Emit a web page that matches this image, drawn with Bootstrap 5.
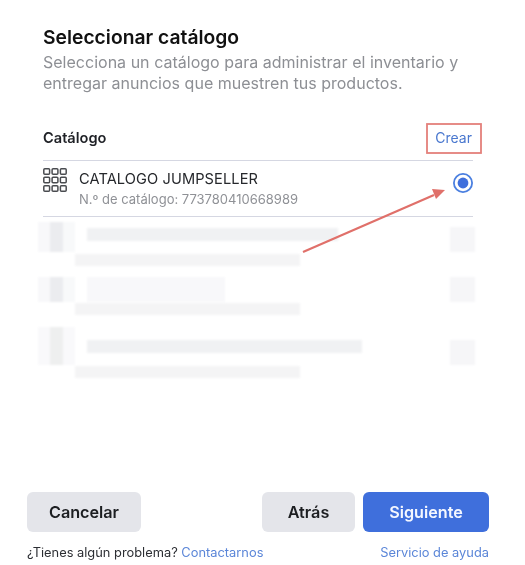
<!DOCTYPE html>
<html lang="es">
<head>
<meta charset="utf-8">
<title>Seleccionar catálogo</title>
<link href="https://cdn.jsdelivr.net/npm/bootstrap@5.3.0/dist/css/bootstrap.min.css" rel="stylesheet">
<style>
html,body{height:100%;overflow:hidden;background:#fff}
body{font-family:Inter,"Liberation Sans",sans-serif;color:#1c1e21;-webkit-font-smoothing:antialiased}
.stage{width:525px;height:565px;filter:blur(.35px)}
.head-block{padding:26px 40px 0 43px}
.ttl{font-size:19.3px;font-weight:600;line-height:22px;margin:0;color:#111;letter-spacing:0}
.desc{font-size:16px;line-height:21px;color:#8d8f94;margin:4px 0 0;word-spacing:.05px;letter-spacing:.01px}
.cat-area{padding:32px 52px 0 43px}
.cat-head{height:35px;border-bottom:1px solid #d5d7e2;padding-bottom:11px}
.cat-lbl{font-size:14.6px;font-weight:600;color:#1f2126;margin-top:3px}
.crear{font-size:14px;color:#4a78cf;text-decoration:none;padding-right:1px}
.cat-row{height:56px;border-bottom:1px solid #d5d7e2;padding-top:7px}
.cat-ico{width:24px;height:24px;margin-right:12px;flex:none}
.cat-name{font-size:14.6px;line-height:20px;color:#26282c;letter-spacing:.1px;margin-top:1px}
.cat-id{font-size:13px;line-height:18px;color:#8f9196;margin-top:1px}
.radio-ico{width:20px;height:20px;margin-top:5px;flex:none}
.ghost-wrap{margin:5px 0 0 -5px;width:437px}
.ghost{height:50px;filter:blur(1px)}
.ghost-last{height:62px}
.g-ico{width:37px;height:30px;flex:none;background:linear-gradient(90deg,#f8f8fa 0 12px,#ebecef 12px 25px,#f8f9fa 25px)}
.g-ico-2{height:25px;margin-top:5px}
.g-ico-3{height:38px;margin-top:5px;background:linear-gradient(90deg,#f9f9fb 0 12px,#eeefef 12px 25px,#f9f9fb 25px)}
.g-body{margin-left:12px;width:276px;flex:none}
.g-a{height:13px;background:#f0f1f3;margin-top:6px}
.g-b{height:12px;background:#f4f4f5;margin-top:13px;margin-left:-12px;width:225px}
.g-end{width:25px;height:25px;background:#f6f6f8;margin-top:5px;margin-left:auto;flex:none}
.g-end-3{margin-top:18px}
.w-1{width:251px}.w-2{width:138px;background:#f8f8fa;height:25px;margin-top:5px}.w-3{width:275px;margin-top:18px}
.g-b2{margin-top:1px}
.foot-area{padding:0 36px 0 27px;margin-top:auto}
.fbtn{height:40px;border:0;border-radius:6px;font-size:16.2px;font-weight:600;line-height:40px;padding:0;background:#e4e5ea;color:#1c1e21}
.fbtn-c{width:114px}.fbtn-a{width:93px}
.fbtn-s{width:126px;background:#3f6fdc;color:#f4f7ff}
.fbtn-s:hover{background:#3f6fdc;color:#f4f7ff}
.fine{font-size:12.85px;line-height:16px;margin-top:13px;padding-bottom:4px;color:#2c2e33}
.fine a{color:#5b86d8;text-decoration:none}
.marks{inset:0;pointer-events:none}
</style>
</head>
<body>
<div class="stage position-relative d-flex flex-column">
  <div class="head-block">
    <h1 class="ttl">Seleccionar catálogo</h1>
    <p class="desc">Selecciona un catálogo para administrar el inventario y<br>entregar anuncios que muestren tus productos.</p>
  </div>
  <div class="cat-area">
    <div class="cat-head d-flex justify-content-between align-items-center">
      <span class="cat-lbl">Catálogo</span>
      <a href="#" class="crear">Crear</a>
    </div>
    <div class="cat-row d-flex align-items-start">
      <svg class="cat-ico" viewBox="0 0 24 24" fill="none" stroke="#4a4c50" stroke-width="1.5">
        <rect x=".8" y=".8" width="5.8" height="5.4" rx="1"/><rect x="9.1" y=".8" width="5.8" height="5.4" rx="1"/><rect x="17.4" y=".8" width="5.8" height="5.4" rx="1"/>
        <rect x=".8" y="9.3" width="5.8" height="5.4" rx="1"/><rect x="9.1" y="9.3" width="5.8" height="5.4" rx="1"/><rect x="17.4" y="9.3" width="5.8" height="5.4" rx="1"/>
        <rect x=".8" y="17.8" width="5.8" height="5.4" rx="1"/><rect x="9.1" y="17.8" width="5.8" height="5.4" rx="1"/><rect x="17.4" y="17.8" width="5.8" height="5.4" rx="1"/>
      </svg>
      <div class="flex-grow-1">
        <div class="cat-name">CATALOGO JUMPSELLER</div>
        <div class="cat-id">N.º de catálogo: 773780410668989</div>
      </div>
      <svg class="radio-ico" viewBox="0 0 20 20"><circle cx="10" cy="10" r="9.1" fill="none" stroke="#4a7fe0" stroke-width="1.8"/><circle cx="10" cy="10" r="5.4" fill="#3f6fdc"/></svg>
    </div>
    <div class="ghost-wrap">
      <div class="ghost d-flex align-items-start">
        <div class="g-ico"></div>
        <div class="g-body"><div class="g-a w-1"></div><div class="g-b"></div></div>
        <div class="g-end"></div>
      </div>
      <div class="ghost d-flex align-items-start">
        <div class="g-ico g-ico-2"></div>
        <div class="g-body"><div class="g-a w-2"></div><div class="g-b g-b2"></div></div>
        <div class="g-end"></div>
      </div>
      <div class="ghost ghost-last d-flex align-items-start">
        <div class="g-ico g-ico-3"></div>
        <div class="g-body"><div class="g-a w-3"></div><div class="g-b"></div></div>
        <div class="g-end g-end-3"></div>
      </div>
    </div>
  </div>
  <div class="foot-area">
    <div class="d-flex align-items-center">
      <button type="button" class="btn fbtn fbtn-c">Cancelar</button>
      <button type="button" class="btn fbtn fbtn-a ms-auto">Atrás</button>
      <button type="button" class="btn fbtn fbtn-s ms-2">Siguiente</button>
    </div>
    <div class="fine d-flex justify-content-between">
      <span>¿Tienes algún problema? <a href="#">Contactarnos</a></span>
      <a href="#">Servicio de ayuda</a>
    </div>
  </div>
  <svg class="marks position-absolute" width="525" height="565" viewBox="0 0 525 565">
    <rect x="427" y="124" width="54" height="29" fill="none" stroke="#e4807b" stroke-width="1.8"/>
    <path d="M303 252 L434 195" stroke="#e0706a" stroke-width="2.2" fill="none"/>
    <path d="M445 190 L432 189 L436 199 Z" fill="#e0706a"/>
  </svg>
</div>
<script src="https://cdn.jsdelivr.net/npm/bootstrap@5.3.0/dist/js/bootstrap.bundle.min.js"></script>
</body>
</html>
